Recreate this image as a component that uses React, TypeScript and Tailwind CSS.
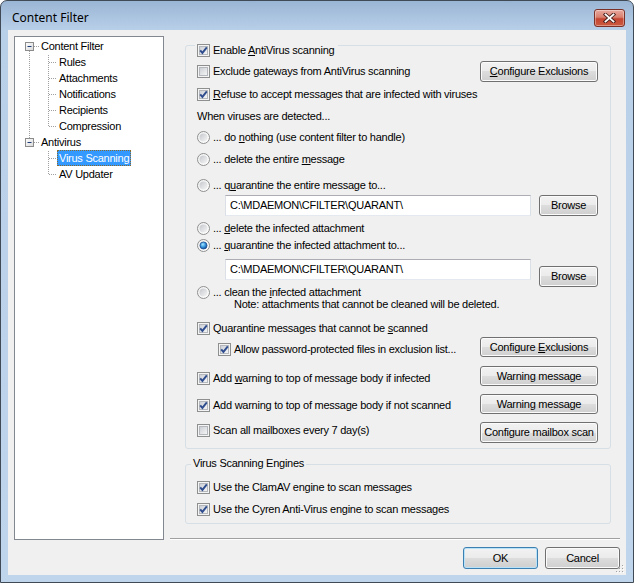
import React from "react";

const txt = "text-[11px] leading-[13px] tracking-[-0.25px] text-black whitespace-nowrap";

function Defs() {
  return (
    <svg width="0" height="0" className="absolute">
      <defs>
        <linearGradient id="cbIn" x1="0" y1="0" x2="1" y2="1">
          <stop offset="0" stopColor="#c9cdd3" />
          <stop offset="1" stopColor="#f7f7f7" />
        </linearGradient>
        <linearGradient id="rdOut" x1="0" y1="0" x2="1" y2="1">
          <stop offset="0" stopColor="#f0f0f0" />
          <stop offset="1" stopColor="#ffffff" />
        </linearGradient>
        <linearGradient id="rdIn" x1="0" y1="0" x2="1" y2="1">
          <stop offset="0" stopColor="#c4c7cc" />
          <stop offset="1" stopColor="#f7f7f7" />
        </linearGradient>
        <radialGradient id="rdSel" cx="0.4" cy="0.35" r="0.7">
          <stop offset="0" stopColor="#a6e5ff" />
          <stop offset="0.5" stopColor="#3a9be0" />
          <stop offset="1" stopColor="#10428e" />
        </radialGradient>
        <linearGradient id="expBox" x1="0" y1="0" x2="1" y2="1">
          <stop offset="0" stopColor="#ffffff" />
          <stop offset="1" stopColor="#d8d8d8" />
        </linearGradient>
      </defs>
    </svg>
  );
}

function Check({ checked }: { checked?: boolean }) {
  return (
    <svg width="13" height="13" viewBox="0 0 13 13" className="block shrink-0">
      <rect x="0.5" y="0.5" width="12" height="12" fill="#f4f4f4" stroke="#8e8f8f" />
      <rect x="2.5" y="2.5" width="8" height="8" fill="url(#cbIn)" stroke="#b4b8bd" />
      {checked && (
        <path d="M3.2 6.3 L5.4 8.9 L9.8 3.3" fill="none" stroke="#2f4d8e" strokeWidth="1.9" />
      )}
    </svg>
  );
}

function Radio({ on }: { on?: boolean }) {
  return (
    <svg width="13" height="13" viewBox="0 0 13 13" className="block shrink-0">
      <circle cx="6.5" cy="6.5" r="6" fill="url(#rdOut)" stroke="#8e8f8f" />
      <circle cx="6.5" cy="6.5" r="4" fill="url(#rdIn)" />
      {on && <circle cx="6.5" cy="6.5" r="3.5" fill="url(#rdSel)" stroke="#1d4f96" strokeWidth="0.8" />}
    </svg>
  );
}

function Btn({ children, cls, def }: { children: React.ReactNode; cls: string; def?: boolean }) {
  return (
    <div
      className={`${cls} shrink-0 flex items-center justify-center rounded-[3px] border ${
        def
          ? "border-[#3c7fb1] shadow-[inset_0_0_0_1px_#b9e2f9]"
          : "border-[#707070] shadow-[inset_0_0_0_1px_#fbfbfb]"
      } bg-[linear-gradient(to_bottom,#f2f2f2_0%,#ebebeb_50%,#dddddd_50%,#cfcfcf_100%)]`}
    >
      <span className={txt}>{children}</span>
    </div>
  );
}

function CbRow({ checked, children }: { checked?: boolean; children: React.ReactNode }) {
  return (
    <div className="flex items-center gap-[3px]">
      <Check checked={checked} />
      <span className={txt}>{children}</span>
    </div>
  );
}

function RdRow({ on, children }: { on?: boolean; children: React.ReactNode }) {
  return (
    <div className="flex items-center gap-[3px]">
      <Radio on={on} />
      <span className={txt}>{children}</span>
    </div>
  );
}

const U = ({ children }: { children: React.ReactNode }) => <span className="underline">{children}</span>;

function PathBox() {
  return (
    <div className="ml-[28px] w-[306px] h-[21px] shrink-0 bg-white border border-[#dbdfe6] border-t-[#abadb3] border-b-[#e3e9ef] flex items-center pl-[4px]">
      <span className={txt}>{"C:\\MDAEMON\\CFILTER\\QUARANT\\"}</span>
    </div>
  );
}

function Tree() {
  const rowCls = `h-[16px] flex items-center ${txt}`;
  const hy = [25, 41, 57, 73, 89];
  return (
    <div className="relative w-[150px] h-[504px] shrink-0 bg-white border border-[#828790]">
      <svg className="absolute left-0 top-0" width="148" height="160" viewBox="0 0 148 160">
        <g stroke="#a0a0a0" strokeWidth="1" strokeDasharray="1 1" fill="none">
          <line x1="14.5" y1="14" x2="14.5" y2="101" />
          <line x1="19" y1="9.5" x2="25" y2="9.5" />
          <line x1="19" y1="105.5" x2="25" y2="105.5" />
          <line x1="33.5" y1="18" x2="33.5" y2="89" />
          {hy.map((y) => (
            <line key={y} x1="34" y1={y + 0.5} x2="42" y2={y + 0.5} />
          ))}
          <line x1="33.5" y1="114" x2="33.5" y2="137" />
          <line x1="34" y1="121.5" x2="42" y2="121.5" />
          <line x1="34" y1="137.5" x2="42" y2="137.5" />
        </g>
        <rect x="10.5" y="5.5" width="8" height="8" fill="url(#expBox)" stroke="#8c8c8c" />
        <line x1="12.5" y1="9.5" x2="16.5" y2="9.5" stroke="#1f3c7a" />
        <rect x="10.5" y="101.5" width="8" height="8" fill="url(#expBox)" stroke="#8c8c8c" />
        <line x1="12.5" y1="105.5" x2="16.5" y2="105.5" stroke="#1f3c7a" />
      </svg>
      <div className="relative flex flex-col pt-[1px]">
        <div className={`${rowCls} pl-[26px]`}>Content Filter</div>
        <div className={`${rowCls} pl-[44px]`}>Rules</div>
        <div className={`${rowCls} pl-[44px]`}>Attachments</div>
        <div className={`${rowCls} pl-[44px]`}>Notifications</div>
        <div className={`${rowCls} pl-[44px]`}>Recipients</div>
        <div className={`${rowCls} pl-[44px]`}>Compression</div>
        <div className={`${rowCls} pl-[26px]`}>Antivirus</div>
        <div className="h-[16px] flex items-center pl-[42px]">
          <span className="h-[16px] flex items-center px-[1px] bg-[#3399ff] border border-dotted border-[#8a6a2a] text-[11px] leading-[13px] tracking-[-0.25px] text-white whitespace-nowrap">
            Virus Scanning
          </span>
        </div>
        <div className={`${rowCls} pl-[44px]`}>AV Updater</div>
      </div>
    </div>
  );
}

function MainGroup() {
  return (
    <div className="relative ml-[15px] mt-[9px] w-[426px] h-[404px] shrink-0 rounded-[3px] border border-[#d5dfe5] pl-[11px] pr-[12px] flex flex-col">
      <div className="absolute left-[9px] top-[-3px] h-[14px] flex items-center gap-[3px] bg-[#f0f0f0] pl-[2px] pr-[4px]">
        <Check checked />
        <span className={txt}>
          Enable <U>A</U>ntiVirus scanning
        </span>
      </div>

      <div className="mt-[15px] h-[21px] flex items-center justify-between">
        <CbRow>
          Exclude <U>g</U>ateways from AntiVirus scanning
        </CbRow>
        <Btn cls="w-[118px] h-[21px]">
          <U>C</U>onfigure Exclusions
        </Btn>
      </div>
      <div className="mt-[4px] h-[16px] flex items-center">
        <CbRow checked>
          <U>R</U>efuse to accept messages that are infected with viruses
        </CbRow>
      </div>
      <div className="mt-[6px] h-[16px] flex items-center">
        <span className={txt}>When viruses are detected...</span>
      </div>
      <div className="mt-[5px] h-[16px] flex items-center">
        <RdRow>
          ... do <U>n</U>othing (use content filter to handle)
        </RdRow>
      </div>
      <div className="mt-[6px] h-[16px] flex items-center">
        <RdRow>
          ... delete the entire <U>m</U>essage
        </RdRow>
      </div>
      <div className="mt-[10px] h-[16px] flex items-center">
        <RdRow>
          ... q<U>u</U>arantine the entire message to...
        </RdRow>
      </div>
      <div className="mt-[2px] h-[21px] flex items-start">
        <PathBox />
        <div className="ml-auto">
          <Btn cls="w-[59px] h-[21px]">Browse</Btn>
        </div>
      </div>
      <div className="mt-[4px] h-[16px] flex items-center">
        <RdRow>
          ... <U>d</U>elete the infected attachment
        </RdRow>
      </div>
      <div className="mt-[1px] h-[16px] flex items-center">
        <RdRow on>
          ... <U>q</U>uarantine the infected attachment to...
        </RdRow>
      </div>
      <div className="mt-[6px] flex items-start">
        <div className="flex-1 flex flex-col">
          <PathBox />
          <div className="mt-[6px] h-[12px] flex items-center">
            <RdRow>
              ... clean the <U>i</U>nfected attachment
            </RdRow>
          </div>
          <div className="h-[12px] flex items-center pl-[37px]">
            <span className={txt}>Note: attachments that cannot be cleaned will be deleted.</span>
          </div>
        </div>
        <div className="mt-[7px]">
          <Btn cls="w-[59px] h-[21px]">Browse</Btn>
        </div>
      </div>
      <div className="mt-[10px] h-[16px] flex items-center">
        <CbRow checked>
          Quarantine messages that cannot be <U>s</U>canned
        </CbRow>
      </div>
      <div className="mt-[1px] h-[24px] flex items-center justify-between">
        <div className="ml-[21px]">
          <CbRow checked>Allow password-protected files in exclusion list...</CbRow>
        </div>
        <div className="self-start">
          <Btn cls="w-[118px] h-[20px]">
            Configure <U>E</U>xclusions
          </Btn>
        </div>
      </div>
      <div className="mt-[5px] h-[24px] flex items-center justify-between">
        <CbRow checked>
          Add <U>w</U>arning to top of message body if infected
        </CbRow>
        <div className="self-start">
          <Btn cls="w-[118px] h-[20px]">Warning message</Btn>
        </div>
      </div>
      <div className="mt-[4px] h-[22px] flex items-center justify-between">
        <CbRow checked>Add warning to top of message body if not scanned</CbRow>
        <div className="self-start">
          <Btn cls="w-[118px] h-[20px]">Warning message</Btn>
        </div>
      </div>
      <div className="mt-[6px] h-[21px] flex items-start justify-between">
        <div className="h-[16px] flex items-center">
          <CbRow>Scan all mailboxes every 7 day(s)</CbRow>
        </div>
        <Btn cls="w-[118px] h-[21px]">Configure mailbox scan</Btn>
      </div>
    </div>
  );
}

function EnginesGroup() {
  return (
    <div className="relative ml-[15px] mt-[15px] w-[426px] h-[60px] shrink-0 rounded-[3px] border border-[#d5dfe5] pl-[11px] flex flex-col">
      <div className={`absolute left-[5px] top-[-8px] bg-[#f0f0f0] px-[2px] ${txt}`}>Virus Scanning Engines</div>
      <div className="mt-[14px] h-[16px] flex items-center">
        <CbRow checked>Use the ClamAV engine to scan messages</CbRow>
      </div>
      <div className="mt-[6px] h-[16px] flex items-center">
        <CbRow checked>Use the Cyren Anti-Virus engine to scan messages</CbRow>
      </div>
    </div>
  );
}

export default function App() {
  return (
    <div className="w-[634px] h-[583px] overflow-hidden font-['Liberation_Sans',Arial,sans-serif]">
      <Defs />
      <div className="relative w-[634px] h-[583px] flex flex-col rounded-t-[7px] border border-[#3f4a56] bg-[linear-gradient(to_bottom,#9ab5d4_0px,#b9d0e9_30px,#bfd5ec_100%)]">
        <div className="h-[29px] shrink-0 flex items-start justify-between pl-[11px] pr-[8px]">
          <span className="mt-[9px] text-[12px] leading-[16px] text-black font-['Noto_Sans',sans-serif]">
            Content Filter
          </span>
          <div className="mt-[8px] w-[31px] h-[18px] rounded-[3px] border border-[#7b3028] shadow-[inset_0_0_0_1px_rgba(255,255,255,0.35)] bg-[linear-gradient(to_bottom,#e9a99f_0%,#d9806f_45%,#c44532_55%,#cc5a40_100%)] flex items-center justify-center">
            <svg width="13" height="10" viewBox="0 0 13 10">
              <g strokeLinecap="square">
                <line x1="2.5" y1="1.5" x2="10.5" y2="8.5" stroke="#4a2320" strokeWidth="3.6" />
                <line x1="10.5" y1="1.5" x2="2.5" y2="8.5" stroke="#4a2320" strokeWidth="3.6" />
                <line x1="2.5" y1="1.5" x2="10.5" y2="8.5" stroke="#ffffff" strokeWidth="1.8" />
                <line x1="10.5" y1="1.5" x2="2.5" y2="8.5" stroke="#ffffff" strokeWidth="1.8" />
              </g>
            </svg>
          </div>
        </div>
        <div className="relative flex-1 mx-[7px] mb-[7px] bg-[#f0f0f0] flex items-start gap-[6px] pt-[6px] px-[6px]">
          <Tree />
          <div className="w-[450px] shrink-0 flex flex-col">
            <MainGroup />
            <EnginesGroup />
            <div className="mt-[14px] h-[2px] border-t border-[#a0a0a0] bg-white" />
            <div className="mt-[7px] flex justify-end gap-[7px]">
              <Btn cls="w-[75px] h-[22px]" def>
                OK
              </Btn>
              <Btn cls="w-[75px] h-[22px]">Cancel</Btn>
            </div>
          </div>
          <svg className="absolute right-[1px] bottom-[1px]" width="12" height="12" viewBox="0 0 12 12">
            {[
              [9, 3],
              [6, 6],
              [9, 6],
              [3, 9],
              [6, 9],
              [9, 9],
            ].map(([x, y]) => (
              <g key={`${x}-${y}`}>
                <rect x={x + 1} y={y + 1} width="1" height="1" fill="#ffffff" />
                <rect x={x} y={y} width="1" height="1" fill="#a0a0a0" />
              </g>
            ))}
          </svg>
        </div>
      </div>
    </div>
  );
}
